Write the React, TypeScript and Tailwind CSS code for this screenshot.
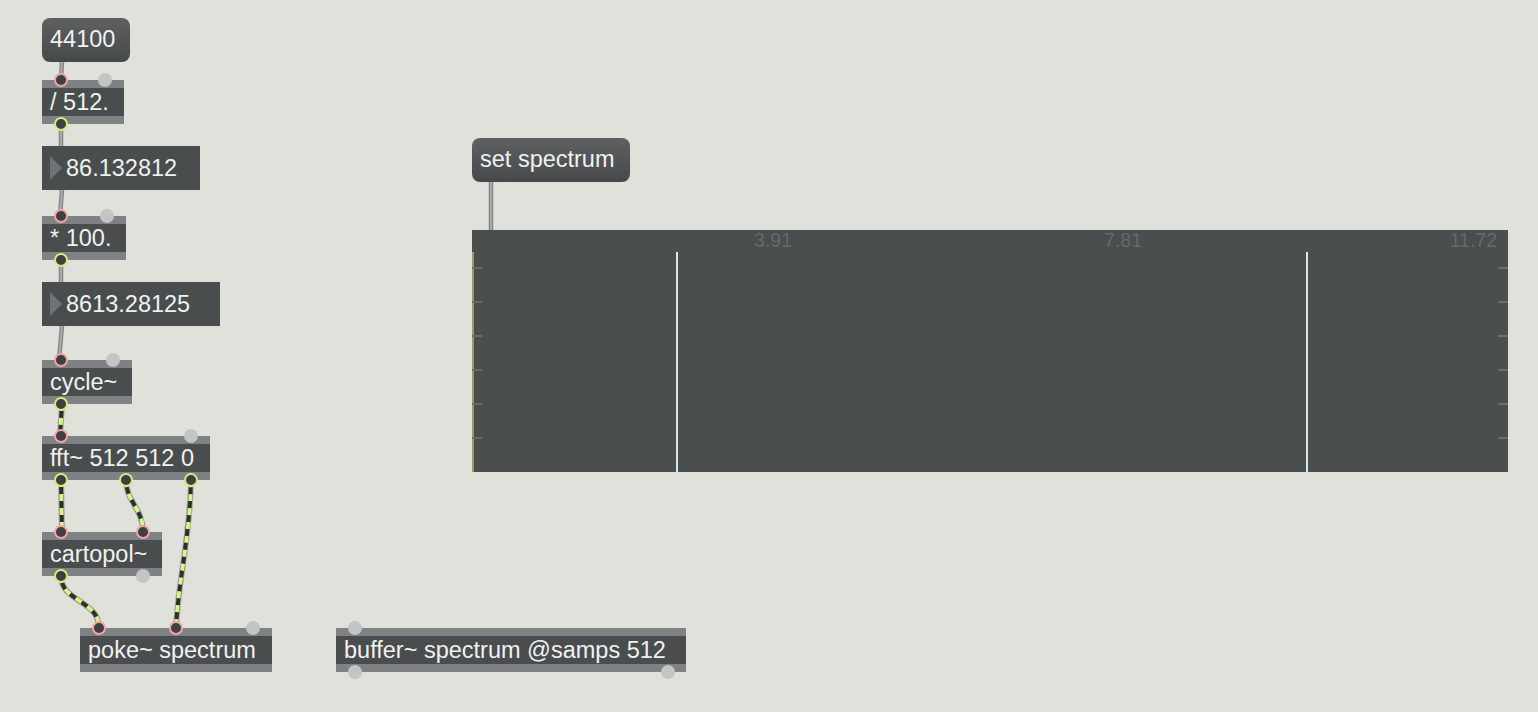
import React from "react";

type Kind = "pink" | "yellow" | "gray";

function Port({ kind, className }: { kind: Kind; className: string }) {
  const k =
    kind === "pink"
      ? "border-2 border-[#f3a49e] bg-[#3c4042]"
      : kind === "yellow"
      ? "border-2 border-[#d6ea7a] bg-[#3c4042]"
      : "bg-[#c3c4c6]";
  return <div className={`absolute w-[14px] h-[14px] rounded-full ${k} ${className}`} />;
}

function Obj({
  className,
  text,
  children,
}: {
  className: string;
  text: string;
  children?: React.ReactNode;
}) {
  return (
    <div className={`absolute h-[44px] flex flex-col bg-[#7f8184] ${className}`}>
      {children}
      <div className="h-[8px]" />
      <div className="relative z-10 h-[28px] bg-[#4a4d4e] pl-[8px] leading-[28px] text-[23.5px] text-[#eff1f1] whitespace-nowrap">
        {text}
      </div>
      <div className="h-[8px]" />
    </div>
  );
}

function Flonum({ className, text }: { className: string; text: string }) {
  return (
    <div
      className={`absolute h-[44px] bg-[#4a4d4e] flex items-center pl-[8px] gap-[4px] text-[23.5px] text-[#eff1f1] whitespace-nowrap ${className}`}
    >
      <div className="w-0 h-0 border-y-[12px] border-y-transparent border-l-[12px] border-l-[#6f7275]" />
      <span className="leading-[44px]">{text}</span>
    </div>
  );
}

function Msg({ className, text }: { className: string; text: string }) {
  return (
    <div
      className={`absolute h-[44px] rounded-[8px] bg-linear-to-b from-[#5e6062] to-[#46494a] pl-[8px] leading-[43px] text-[23.5px] text-[#eff1f1] whitespace-nowrap ${className}`}
    >
      {text}
    </div>
  );
}

function ControlCord({ d }: { d: string }) {
  return (
    <g fill="none" strokeLinecap="round">
      <path d={d} stroke="#858687" strokeWidth={4.5} />
      <path d={d} stroke="#a9aaab" strokeWidth={2} />
    </g>
  );
}

function SignalCord({ d }: { d: string }) {
  return (
    <g fill="none">
      <path d={d} stroke="#a3a89a" strokeWidth={6} strokeLinecap="round" />
      <path d={d} stroke="#2c2f2b" strokeWidth={4} />
      <path d={d} stroke="#d5f48c" strokeWidth={4} strokeDasharray="7 7" />
    </g>
  );
}

export default function App() {
  return (
    <div className="relative w-[1538px] h-[712px] overflow-hidden bg-[#e0e1da] font-['Liberation_Sans',Arial,sans-serif]">
      <svg className="absolute inset-0" width={1538} height={712}>
        <ControlCord d="M62 62 L61 80" />
        <ControlCord d="M61 123 L61 146" />
        <ControlCord d="M62 190 L60 216" />
        <ControlCord d="M61 260 L61 282" />
        <ControlCord d="M62 326 L59 360" />
        <ControlCord d="M491 182 L491 230" />
        <SignalCord d="M62 404 L60 436" />
        <SignalCord d="M61 480 L62 532" />
        <SignalCord d="M126 480 C126 502, 143 508, 143 532" />
        <SignalCord d="M191 480 C190 540, 178 580, 176 628" />
        <SignalCord d="M61 576 C61 602, 99 600, 99 628" />
      </svg>

      <Msg className="left-[42px] top-[18px] w-[88px]" text="44100" />

      <Obj className="left-[42px] top-[80px] w-[82px]" text="/ 512.">
        <Port kind="pink" className="left-[12px] top-[-7px]" />
        <Port kind="gray" className="right-[12px] top-[-7px]" />
        <Port kind="yellow" className="left-[12px] bottom-[-7px]" />
      </Obj>

      <Flonum className="left-[42px] top-[146px] w-[158px]" text="86.132812" />

      <Obj className="left-[42px] top-[216px] w-[84px]" text="* 100.">
        <Port kind="pink" className="left-[12px] top-[-7px]" />
        <Port kind="gray" className="right-[12px] top-[-7px]" />
        <Port kind="yellow" className="left-[12px] bottom-[-7px]" />
      </Obj>

      <Flonum className="left-[42px] top-[282px] w-[178px]" text="8613.28125" />

      <Obj className="left-[42px] top-[360px] w-[90px]" text="cycle~">
        <Port kind="pink" className="left-[12px] top-[-7px]" />
        <Port kind="gray" className="right-[12px] top-[-7px]" />
        <Port kind="yellow" className="left-[12px] bottom-[-7px]" />
      </Obj>

      <Obj className="left-[42px] top-[436px] w-[168px]" text="fft~ 512 512 0">
        <Port kind="pink" className="left-[12px] top-[-7px]" />
        <Port kind="gray" className="right-[12px] top-[-7px]" />
        <Port kind="yellow" className="left-[12px] bottom-[-7px]" />
        <Port kind="yellow" className="left-[77px] bottom-[-7px]" />
        <Port kind="yellow" className="right-[12px] bottom-[-7px]" />
      </Obj>

      <Obj className="left-[42px] top-[532px] w-[120px]" text="cartopol~">
        <Port kind="pink" className="left-[12px] top-[-7px]" />
        <Port kind="pink" className="right-[12px] top-[-7px]" />
        <Port kind="yellow" className="left-[12px] bottom-[-7px]" />
        <Port kind="gray" className="right-[12px] bottom-[-7px]" />
      </Obj>

      <Obj className="left-[80px] top-[628px] w-[192px]" text="poke~ spectrum">
        <Port kind="pink" className="left-[12px] top-[-7px]" />
        <Port kind="pink" className="left-[89px] top-[-7px]" />
        <Port kind="gray" className="right-[12px] top-[-7px]" />
      </Obj>

      <Obj className="left-[336px] top-[628px] w-[350px]" text="buffer~ spectrum @samps 512">
        <Port kind="gray" className="left-[12px] top-[-7px]" />
        <Port kind="gray" className="left-[12px] bottom-[-7px]" />
        <Port kind="gray" className="right-[11px] bottom-[-7px]" />
      </Obj>

      <Msg className="left-[472px] top-[138px] w-[158px]" text="set spectrum" />

      {/* plot */}
      <div className="absolute left-[472px] top-[230px] w-[1036px] h-[242px] bg-[#4a4e4d]">
        <svg className="absolute inset-0" width={1036} height={242}>
          <rect x={0} y={22} width={2} height={220} fill="#9b9b62" />
          {[38, 72, 106, 140, 174, 208].map((y) => (
            <g key={y}>
              <rect x={0} y={y - 1} width={10} height={2} fill="#666a6b" />
              <rect x={1026} y={y - 1} width={10} height={2} fill="#6c6f71" />
            </g>
          ))}
          <rect x={204} y={22} width={2} height={220} fill="#d6ebf1" />
          <rect x={834} y={22} width={2} height={220} fill="#d6ebf1" />
        </svg>
        <span className="absolute top-[1px] right-[716px] text-[19.5px] leading-[19px] text-[#64696b]">3.91</span>
        <span className="absolute top-[1px] right-[366px] text-[19.5px] leading-[19px] text-[#64696b]">7.81</span>
        <span className="absolute top-[1px] right-[11px] text-[19.5px] leading-[19px] text-[#64696b]">11.72</span>
      </div>
    </div>
  );
}
